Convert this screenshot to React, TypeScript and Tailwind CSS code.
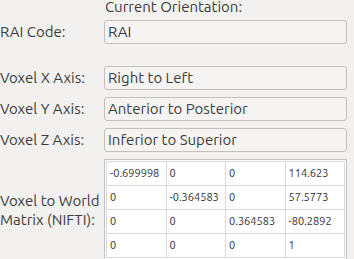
const ui = "font-['Ubuntu','Open_Sans','DejaVu_Sans',sans-serif]";

const matrix = [
  ["-0.699998", "0", "0", "114.623"],
  ["0", "-0.364583", "0", "57.5773"],
  ["0", "0", "0.364583", "-80.2892"],
  ["0", "0", "0", "1"],
];

function Field({ value }: { value: string }) {
  return (
    <div className="flex h-[24px] flex-1 items-center rounded-[3px] border border-[#c4c0ba] bg-[#f5f4f3] pl-[3px] text-[15px] text-[#3c3c3c]">
      {value}
    </div>
  );
}

function Row({
  label,
  value,
  className = "",
}: {
  label: string;
  value: string;
  className?: string;
}) {
  return (
    <div className={`flex items-center ${className}`}>
      <div className="w-[104px] shrink-0 text-[15px] text-[#3c3c3c]">{label}</div>
      <Field value={value} />
    </div>
  );
}

export default function App() {
  return (
    <div className={`h-[259px] w-[354px] overflow-hidden bg-[#f2f1f0] pr-[7px] ${ui}`}>
      <div className="-mt-[2px] h-[15px] pl-[105px] text-[15px] leading-[18px] text-[#3c3c3c]">
        Current Orientation:
      </div>
      <Row label="RAI Code:" value="RAI" className="mt-[7px]" />
      <Row label="Voxel X Axis:" value="Right to Left" className="mt-[22px]" />
      <Row label="Voxel Y Axis:" value="Anterior to Posterior" className="mt-[7px]" />
      <Row label="Voxel Z Axis:" value="Inferior to Superior" className="mt-[7px]" />
      <div className="mt-[7px] flex items-center">
        <div className="w-[104px] shrink-0 text-[15px] leading-[19px] text-[#3c3c3c]">
          Voxel to World
          <br />
          Matrix (NIFTI):
        </div>
        <div className="flex-1 border border-[#c2c2c2] bg-white p-px">
          <table className="w-full table-fixed border-collapse text-[#333]">
            <tbody>
              {matrix.map((r, i) => (
                <tr key={i} className="h-[24px]">
                  {r.map((c, j) => (
                    <td
                      key={j}
                      className="overflow-hidden whitespace-nowrap border border-[#d9d9d9] pl-[3px] text-[11px]"
                    >
                      {c}
                    </td>
                  ))}
                </tr>
              ))}
            </tbody>
          </table>
        </div>
      </div>
    </div>
  );
}
